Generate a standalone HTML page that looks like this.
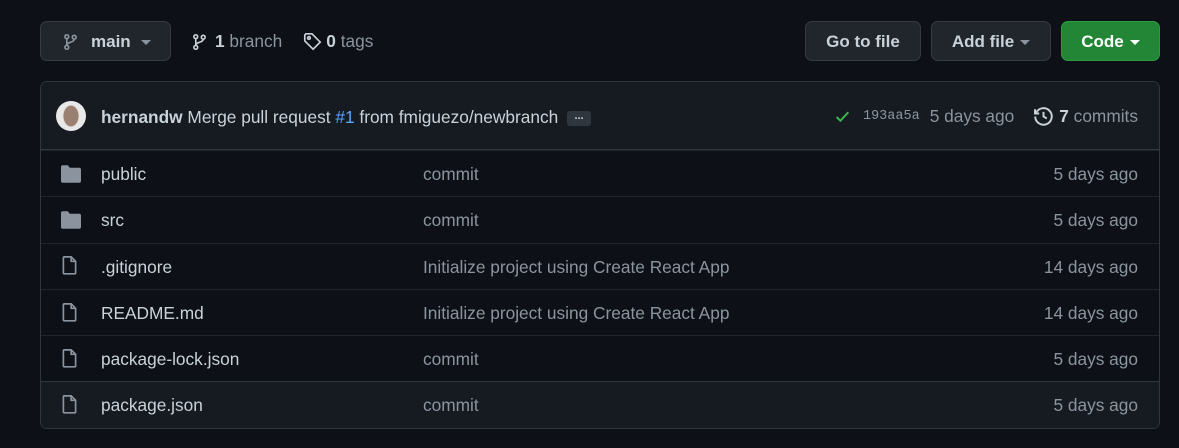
<!DOCTYPE html>
<html><head><meta charset="utf-8"><style>
*{box-sizing:border-box;margin:0;padding:0}
body{width:1179px;height:448px;background:#0d1117;font-family:"Liberation Sans",sans-serif;color:#c9d1d9;font-size:17.3px;position:relative;overflow:hidden}
.btn{position:absolute;top:21px;height:40px;border:1px solid #363b42;border-radius:7px;background:#21262d;color:#c9d1d9;font-weight:bold;font-size:17px;display:flex;align-items:center;justify-content:center;padding-top:2px}
.caret{display:inline-block;width:0;height:0;border-left:5px solid transparent;border-right:5px solid transparent;border-top:5px solid #8b949e;margin-left:6px;margin-top:0px}
.box{position:absolute;left:40px;top:81px;width:1120px;height:348px;border:1px solid #30363d;border-radius:7px;overflow:hidden}
.head{height:68px;background:#161b22;border-bottom:1px solid #30363d;position:relative}
.row{height:46.3px;border-top:1px solid #21262d;position:relative;display:flex;align-items:center}
.row:first-of-type{border-top:none}
.row .name{position:absolute;left:60px;color:#c9d1d9;top:13px}
.row .msg{position:absolute;left:382px;color:#8b949e;top:13px}
.row .age{position:absolute;right:21px;color:#8b949e;top:13px}
.row svg{position:absolute;left:20px}
.abs{position:absolute}
</style></head><body>
<div class="btn" style="left:40px;width:131px;justify-content:flex-start;padding-left:21px">
<svg width="17" height="18" viewBox="0 0 16 16" fill="none" stroke="#8b949e" stroke-width="1.5"><circle cx="4.5" cy="3" r="1.8"/><circle cx="4.5" cy="13" r="1.8"/><circle cx="11.5" cy="3.5" r="1.8"/><path d="M4.5 5v6M11.5 5.5c0 3-7 2.5-7 5.5"/></svg>
<span style="margin-left:12px">main</span><span class="caret" style="margin-left:10px"></span></div>
<div class="abs" style="left:191px;top:31px;display:flex;align-items:center;color:#8b949e">
<svg width="17" height="18" viewBox="0 0 16 16" fill="none" stroke="#c9d1d9" stroke-width="1.5"><circle cx="4.5" cy="3" r="1.8"/><circle cx="4.5" cy="13" r="1.8"/><circle cx="11.5" cy="3.5" r="1.8"/><path d="M4.5 5v6M11.5 5.5c0 3-7 2.5-7 5.5"/></svg>
<b style="color:#c9d1d9;margin-left:7px">1</b>&nbsp;branch
<svg style="margin-left:21px" width="19" height="19" viewBox="0 0 16 16" fill="none" stroke="#c9d1d9" stroke-width="1.4"><path d="M1.5 2.5v5l7 7 6-6-7-7h-5z"/><circle cx="5" cy="5" r="1.1"/></svg>
<b style="color:#c9d1d9;margin-left:4px">0</b>&nbsp;tags</div>
<div class="btn" style="left:805px;width:116px">Go to file</div>
<div class="btn" style="left:931px;width:120px">Add file<span class="caret"></span></div>
<div class="btn" style="left:1061px;width:99px;background:#238636;border-color:#2e9a40;color:#fff">Code<span class="caret" style="border-top-color:#fff"></span></div>
<div class="box">
<div class="head">
<div class="abs" style="left:15px;top:19px;width:30px;height:30px;border-radius:50%;background:radial-gradient(ellipse 8px 11px at 50% 50%,#9a8070 0 90%,#e8e8e8 100%)"></div>
<div class="abs" style="left:60px;top:25px"><b>hernandw</b> Merge pull request <span style="color:#58a6ff">#1</span> from fmiguezo/newbranch <span style="display:inline-block;background:#30363d;border-radius:3px;width:24px;height:15px;font-size:11px;text-align:center;line-height:10px;vertical-align:middle;font-weight:bold;margin-left:4px">...</span></div>
<div class="abs" style="right:21px;top:24px;display:flex;align-items:center;color:#8b949e">
<svg width="17" height="17" viewBox="0 0 16 16" fill="none" stroke="#3fb950" stroke-width="1.8"><path d="M2.5 8.5l3.5 3.5 7.5-8"/></svg>
<span style="font-family:'Liberation Mono',monospace;font-size:13.5px;margin-left:12px">193aa5a</span>
<span style="margin-left:10px">5 days ago</span>
<svg style="margin-left:19px" width="21" height="21" viewBox="0 0 16 16" fill="none" stroke="#c9d1d9" stroke-width="1.5"><path d="M2.2 5.5A6.3 6.3 0 1 1 1.7 8M1.5 2.5v3.2h3.2M8 4.5V8l2.5 1.5"/></svg>
<b style="color:#c9d1d9;margin-left:5px">7</b>&nbsp;commits</div>
</div>
<div class="row"><svg width="20" height="18" viewBox="0 0 16 14"><path fill="#8b949e" d="M0 1.5A1.5 1.5 0 011.5 0h4l1.5 2H14.5A1.5 1.5 0 0116 3.5v9a1.5 1.5 0 01-1.5 1.5h-13A1.5 1.5 0 010 12.5z"/></svg><span class="name">public</span><span class="msg">commit</span><span class="age">5 days ago</span></div>
<div class="row"><svg width="20" height="18" viewBox="0 0 16 14"><path fill="#8b949e" d="M0 1.5A1.5 1.5 0 011.5 0h4l1.5 2H14.5A1.5 1.5 0 0116 3.5v9a1.5 1.5 0 01-1.5 1.5h-13A1.5 1.5 0 010 12.5z"/></svg><span class="name">src</span><span class="msg">commit</span><span class="age">5 days ago</span></div>
<div class="row"><svg width="17" height="20" viewBox="0 0 14 18" fill="none" stroke="#8b949e" stroke-width="1.5"><path d="M1.5 1.5a.7.7 0 01.7-.7H8.5l4 4v10.5a.7.7 0 01-.7.7H2.2a.7.7 0 01-.7-.7zM8.5 .8v4h4"/></svg><span class="name">.gitignore</span><span class="msg">Initialize project using Create React App</span><span class="age">14 days ago</span></div>
<div class="row"><svg width="17" height="20" viewBox="0 0 14 18" fill="none" stroke="#8b949e" stroke-width="1.5"><path d="M1.5 1.5a.7.7 0 01.7-.7H8.5l4 4v10.5a.7.7 0 01-.7.7H2.2a.7.7 0 01-.7-.7zM8.5 .8v4h4"/></svg><span class="name">README.md</span><span class="msg">Initialize project using Create React App</span><span class="age">14 days ago</span></div>
<div class="row"><svg width="17" height="20" viewBox="0 0 14 18" fill="none" stroke="#8b949e" stroke-width="1.5"><path d="M1.5 1.5a.7.7 0 01.7-.7H8.5l4 4v10.5a.7.7 0 01-.7.7H2.2a.7.7 0 01-.7-.7zM8.5 .8v4h4"/></svg><span class="name">package-lock.json</span><span class="msg">commit</span><span class="age">5 days ago</span></div>
<div class="row" style="background:#161b22;border-top-color:#30363d"><svg width="17" height="20" viewBox="0 0 14 18" fill="none" stroke="#8b949e" stroke-width="1.5"><path d="M1.5 1.5a.7.7 0 01.7-.7H8.5l4 4v10.5a.7.7 0 01-.7.7H2.2a.7.7 0 01-.7-.7zM8.5 .8v4h4"/></svg><span class="name">package.json</span><span class="msg">commit</span><span class="age">5 days ago</span></div>
</div>
</body></html>
